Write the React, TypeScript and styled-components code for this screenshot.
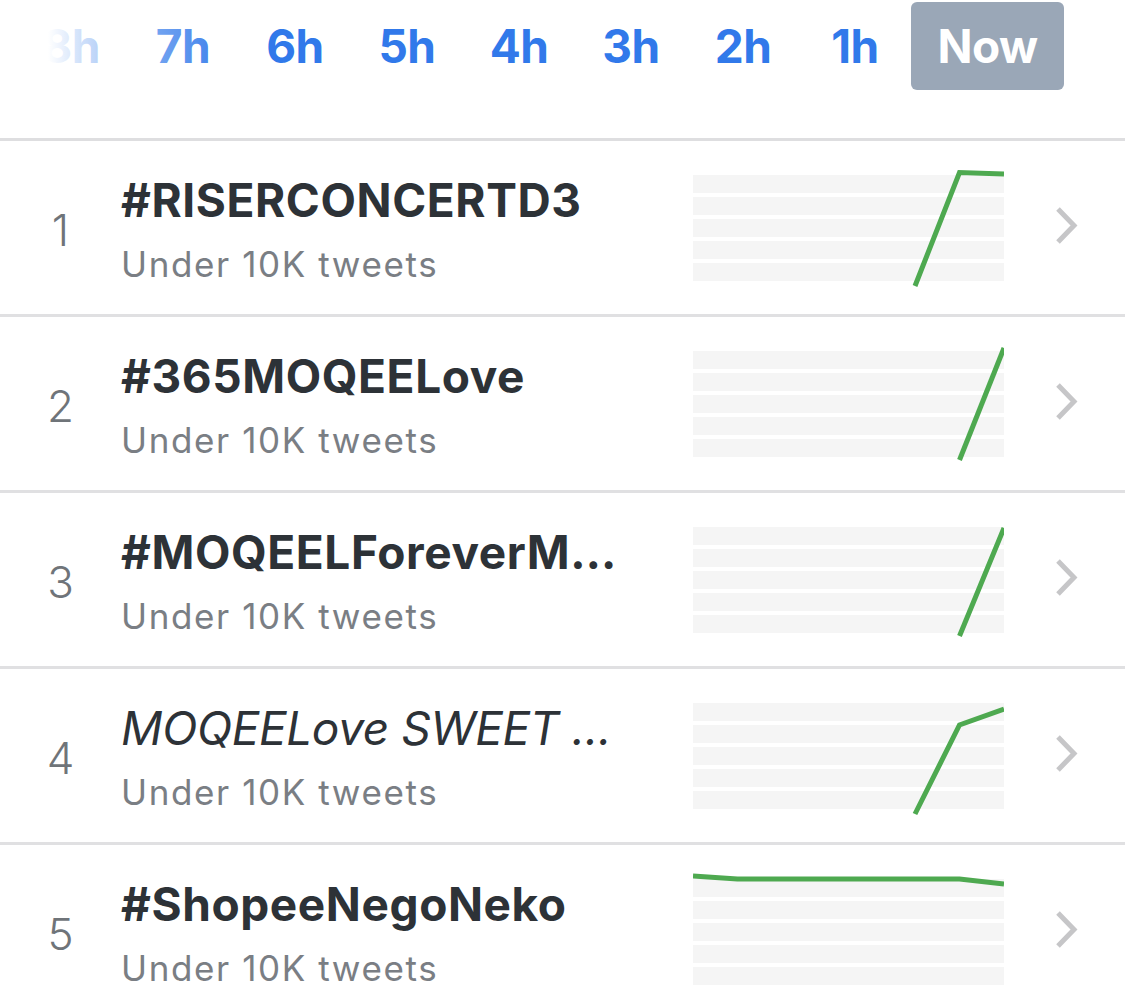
import React from "react";
import styled, { createGlobalStyle } from "styled-components";

const Global = createGlobalStyle`
  html, body { margin: 0; padding: 0; background: #ffffff; }
  body { font-family: Inter, "Noto Sans", Roboto, sans-serif; overflow: hidden; }
  * { box-sizing: border-box; }
`;

const Page = styled.div`
  width: 1125px;
  height: 1007px;
  overflow: hidden;
  background: #fff;
`;

const Header = styled.div`
  position: relative;
  height: 141px;
  border-bottom: 3px solid #dedee0;
  display: flex;
  justify-content: flex-end;
  align-items: flex-start;
  padding: 2px 61px 0 0;
`;

const Fade = styled.div`
  position: absolute;
  left: 0;
  top: 0;
  width: 260px;
  height: 100px;
  pointer-events: none;
  background: linear-gradient(
    to right,
    #ffffff 0px,
    #ffffff 48px,
    rgba(255, 255, 255, 0.78) 80px,
    rgba(255, 255, 255, 0.3) 160px,
    rgba(255, 255, 255, 0) 240px
  );
`;

const Tab = styled.div<{ $active?: boolean }>`
  flex: none;
  width: ${(p) => (p.$active ? "153px" : "112px")};
  height: 88px;
  display: flex;
  align-items: center;
  justify-content: center;
  border-radius: 6px;
  background: ${(p) => (p.$active ? "#9aa7b7" : "transparent")};
  color: ${(p) => (p.$active ? "#ffffff" : "#3179ea")};
  font-size: 46px;
  font-weight: 700;
  letter-spacing: -0.5px;
`;

const List = styled.div`
  display: flex;
  flex-direction: column;
`;

const Row = styled.div`
  height: 176px;
  flex: none;
  border-bottom: 3px solid #e0e0e2;
  display: grid;
  grid-template-columns: 121px 572px 311px 1fr;
  align-items: center;
`;

const Rank = styled.div`
  text-align: center;
  font-size: 44px;
  font-weight: 300;
  color: #6f7479;
  padding-top: 5px;
`;

const TextCol = styled.div`
  display: flex;
  flex-direction: column;
  gap: 15px;
  padding-top: 2px;
  min-width: 0;
`;

const Title = styled.div<{ $italic?: boolean }>`
  font-size: 46px;
  line-height: 56px;
  letter-spacing: ${(p) => (p.$italic ? "-0.4px" : "0.6px")};
  font-weight: ${(p) => (p.$italic ? 400 : 700)};
  font-style: ${(p) => (p.$italic ? "italic" : "normal")};
  color: #2d3237;
  white-space: nowrap;
  overflow: hidden;
`;

const Sub = styled.div`
  font-size: 35px;
  line-height: 42px;
  letter-spacing: 1.6px;
  font-weight: 400;
  color: #7a7e84;
  white-space: nowrap;
`;

const ChevCell = styled.div`
  display: flex;
  align-items: center;
  padding-left: 48px;
  padding-bottom: 4px;
`;

type Pt = [number, number];

const Spark: React.FC<{ pts: Pt[] }> = ({ pts }) => (
  <svg width="311" height="120" viewBox="0 0 311 120" style={{ display: "block" }}>
    {[7, 29, 51, 73, 95].map((y) => (
      <rect key={y} x="0" y={y} width="311" height="18" fill="#f5f5f5" />
    ))}
    <polyline
      points={pts.map((p) => p.join(",")).join(" ")}
      fill="none"
      stroke="#4ea950"
      strokeWidth="5"
      strokeLinejoin="miter"
      strokeLinecap="butt"
    />
  </svg>
);

const Chevron = () => (
  <svg width="28" height="40" viewBox="0 0 28 40" style={{ display: "block" }}>
    <polyline points="6,3 22,19.5 6,36" fill="none" stroke="#c6c6c8" strokeWidth="5" strokeLinecap="butt" strokeLinejoin="miter" />
  </svg>
);

const trends: { rank: number; title: string; italic?: boolean; pts: Pt[] }[] = [
  { rank: 1, title: "#RISERCONCERTD3", pts: [[222, 118], [266.5, 4.5], [311, 6]] },
  { rank: 2, title: "#365MOQEELove", pts: [[266.5, 116], [311, 4]] },
  { rank: 3, title: "#MOQEELForeverM…", pts: [[266.5, 116], [311, 8]] },
  { rank: 4, title: "MOQEELove SWEET …", italic: true, pts: [[222, 118], [266.5, 29], [311, 13]] },
  { rank: 5, title: "#ShopeeNegoNeko", pts: [[0, 4], [44.4, 7], [266.5, 7], [311, 12]] },
];

const tabs = ["8h", "7h", "6h", "5h", "4h", "3h", "2h", "1h"];

export default function App() {
  return (
    <Page>
      <Global />
      <Header>
        {tabs.map((t) => (
          <Tab key={t}>{t}</Tab>
        ))}
        <Tab $active>Now</Tab>
        <Fade />
      </Header>
      <List>
        {trends.map((t) => (
          <Row key={t.rank}>
            <Rank>{t.rank}</Rank>
            <TextCol>
              <Title $italic={t.italic}>{t.title}</Title>
              <Sub>Under 10K tweets</Sub>
            </TextCol>
            <Spark pts={t.pts} />
            <ChevCell>
              <Chevron />
            </ChevCell>
          </Row>
        ))}
      </List>
    </Page>
  );
}
